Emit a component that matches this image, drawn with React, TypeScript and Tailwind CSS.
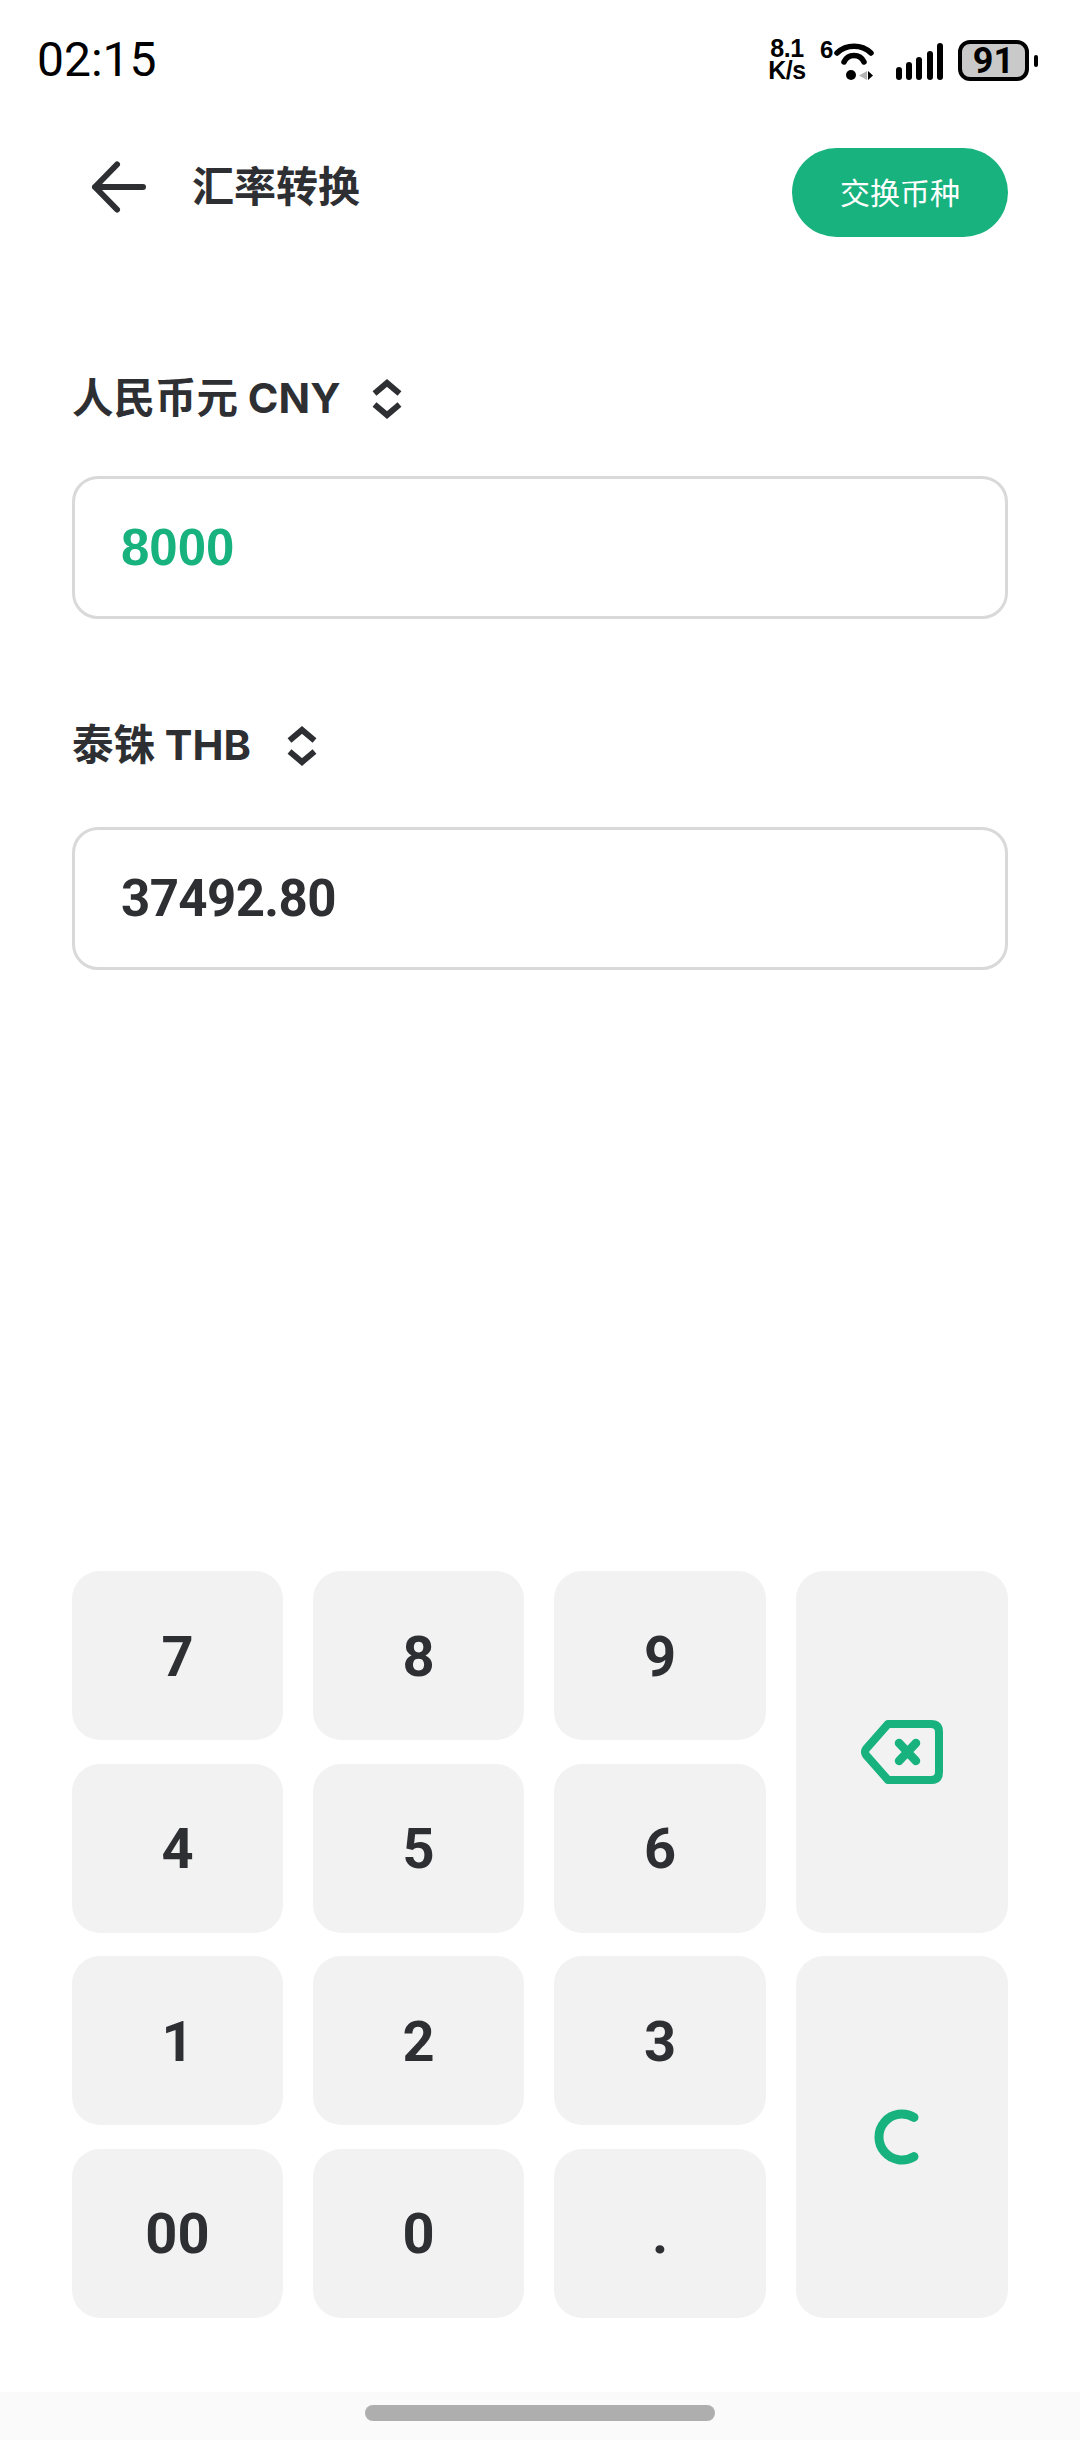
const KEYS_LEFT = [
  ['7', '8', '9'],
  ['4', '5', '6'],
  ['1', '2', '3'],
  ['00', '0', '.'],
]

function StatusIcons() {
  return (
    <div className="flex items-start">
      <div className="w-[40px] mt-[-1px] text-center font-['Liberation_Sans',sans-serif] font-bold text-[25px] leading-[22px] tracking-[-0.5px] text-black">
        8.1
        <br />
        K/s
      </div>
      <div className="ml-[13px] w-[12px] font-['Liberation_Sans',sans-serif] font-bold text-[24px] leading-[24px] text-black">6</div>
      <svg width="48" height="44" viewBox="0 0 48 44" className="shrink-0">
        <path d="M5 15 A25 25 0 0 1 39 15" fill="none" stroke="#000" strokeWidth="5.5" strokeLinecap="round" />
        <path d="M12 24 A11 11 0 0 1 32 24" fill="none" stroke="#000" strokeWidth="5.5" strokeLinecap="round" />
        <circle cx="19" cy="37" r="5" fill="#000" />
        <path d="M27 37.5 L35 33 V42 Z" fill="#b5b5b5" />
        <path d="M36 33 L41 37.5 L36 42 Z" fill="#000" />
      </svg>
      <svg width="48" height="40" viewBox="0 0 48 40" className="ml-[16px] mt-[4px] shrink-0">
        <rect x="0" y="25" width="6" height="13" rx="3" fill="#000" />
        <rect x="10" y="20" width="6" height="18" rx="3" fill="#000" />
        <rect x="20" y="15" width="6" height="23" rx="3" fill="#000" />
        <rect x="31" y="9" width="6" height="29" rx="3" fill="#000" />
        <rect x="41" y="1" width="6" height="37" rx="3" fill="#000" />
      </svg>
      <div className="ml-[14px] mt-[2px] w-[71px] h-[41px] rounded-[12px] border-[4px] border-black bg-[#c9c9c9] flex items-center justify-center font-['Roboto',sans-serif] font-bold text-[36px] leading-none text-black">
        91
      </div>
      <div className="ml-[5px] mt-[17px] w-[4px] h-[12px] rounded-full bg-black" />
    </div>
  )
}

function UpDown() {
  return (
    <svg width="30" height="40" viewBox="0 0 30 40" className="shrink-0">
      <path d="M2.5 14.5 L15 4 L27.5 14.5" fill="none" stroke="#2e2f33" strokeWidth="6" />
      <path d="M2.5 25.5 L15 36 L27.5 25.5" fill="none" stroke="#2e2f33" strokeWidth="6" />
    </svg>
  )
}

function Key({ label }: { label: string }) {
  return (
    <button
      type="button"
      className="rounded-[28px] bg-[#f2f2f2] pt-[2px] flex items-center justify-center font-['Roboto',sans-serif] font-bold text-[56px] leading-none text-[#2e2f33]"
    >
      {label}
    </button>
  )
}

export default function App() {
  return (
    <div className="w-[1080px] h-[2440px] bg-white flex flex-col overflow-hidden font-['Inter','Noto_Sans_CJK_SC',sans-serif]">
      {/* status bar */}
      <div className="h-[148px] shrink-0 px-[37px] pt-[38px] flex items-start justify-between">
        <span className="font-['Roboto',sans-serif] text-[48px] leading-[44px] text-black">02:15</span>
        <div className="mr-[5px]">
          <StatusIcons />
        </div>
      </div>

      {/* header */}
      <div className="h-[89px] shrink-0 pl-[90px] pr-[72px] flex items-center">
        <div className="flex items-center mb-[11px]">
          <svg width="60" height="60" viewBox="0 0 60 60" className="shrink-0">
            <path
              d="M53 30 H5 M27 7.5 L5 30 L27 52.5"
              fill="none"
              stroke="#2e2f33"
              strokeWidth="6"
              strokeLinecap="round"
              strokeLinejoin="round"
            />
          </svg>
          <h1 className="ml-[42px] text-[42px] font-bold leading-none text-[#2e2f33]">汇率转换</h1>
        </div>
        <button
          type="button"
          className="ml-auto w-[216px] h-[89px] rounded-full bg-[#17b27e] text-white text-[30px] leading-none"
        >
          交换币种
        </button>
      </div>

      {/* converter */}
      <div className="px-[72px] mt-[137px] flex flex-col">
        <div className="h-[50px] flex items-center text-[41.5px] font-bold text-[#2e2f33]">
          <span className="leading-none">人民币元 CNY</span>
          <span className="ml-[31px]">
            <UpDown />
          </span>
        </div>
        <div className="mt-[52px] h-[143px] rounded-[26px] border-[3px] border-[#d9d9d9] pl-[46px] flex items-center font-['Liberation_Sans',sans-serif] font-bold text-[51px] leading-none text-[#17b27e]">
          8000
        </div>

        <div className="mt-[102px] h-[50px] flex items-center text-[41.5px] font-bold text-[#2e2f33]">
          <span className="leading-none">泰铢 THB</span>
          <span className="ml-[36px]">
            <UpDown />
          </span>
        </div>
        <div className="mt-[56px] h-[143px] rounded-[26px] border-[3px] border-[#d9d9d9] pl-[46px] flex items-center font-['Roboto',sans-serif] font-bold text-[51px] tracking-[-0.6px] leading-none text-[#2e2f33]">
          37492.80
        </div>
      </div>

      {/* keypad */}
      <div className="mt-[601px] mx-[72px] grid grid-cols-[211px_211px_212px_212px] grid-rows-[repeat(4,169px)] gap-x-[30px] gap-y-[23.67px]">
        {KEYS_LEFT.flatMap((row, r) => {
          const cells = row.map((k) => <Key key={k} label={k} />)
          if (r === 0) {
            cells.push(
              <button key="back" type="button" className="row-span-2 rounded-[28px] bg-[#f2f2f2] flex items-center justify-center">
                <svg width="82" height="64" viewBox="0 0 82 64">
                  <path
                    d="M27 4 H70 Q78 4 78 12 V52 Q78 60 70 60 H27 L5 35 Q3 32 5 29 Z"
                    fill="none"
                    stroke="#17b27e"
                    strokeWidth="8"
                    strokeLinejoin="round"
                  />
                  <path d="M38 23 L55 41 M55 23 L38 41" fill="none" stroke="#17b27e" strokeWidth="8.5" strokeLinecap="round" />
                </svg>
              </button>,
            )
          }
          if (r === 2) {
            cells.push(
              <button key="clear" type="button" className="row-span-2 rounded-[28px] bg-[#f2f2f2] flex items-center justify-center">
                <svg width="60" height="60" viewBox="0 0 60 60">
                  <path d="M42 10.4 A23 23 0 1 0 42 49.6" fill="none" stroke="#17b27e" strokeWidth="9" strokeLinecap="round" />
                </svg>
              </button>,
            )
          }
          return cells
        })}
      </div>

      {/* home indicator */}
      <div className="mt-auto h-[48px] bg-[#fafafa] flex justify-center pt-[13px]">
        <div className="w-[350px] h-[16px] rounded-full bg-[#aeaeae]" />
      </div>
    </div>
  )
}
